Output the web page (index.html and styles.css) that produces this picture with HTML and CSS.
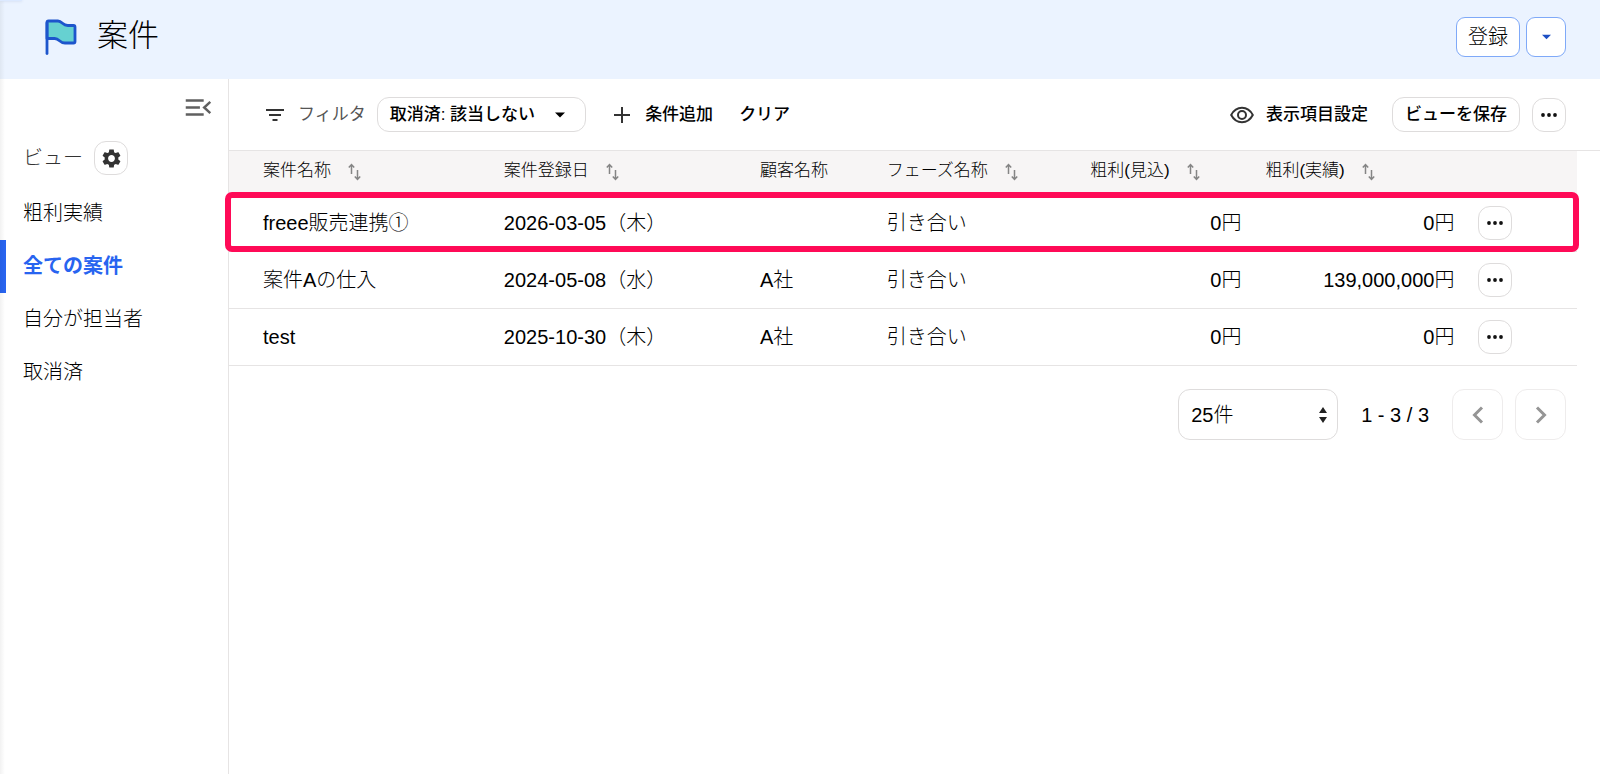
FILE: index.html
```html
<!DOCTYPE html>
<html lang="ja">
<head>
<meta charset="utf-8">
<title>案件</title>
<link rel="stylesheet" href="styles.css">
</head>
<body>
<svg class="defs" aria-hidden="true">
  <symbol id="sort" viewBox="0 0 14 18"><path d="M3.5 11V2M.8 4.5 3.5 1.5 6.200 4.500M9.500 7v9M6.800 13.500l2.700 3 2.700-3" fill="none" stroke="#858585" stroke-width="1.500"/></symbol>
  <symbol id="dots" viewBox="0 0 16 4"><circle cx="2" cy="2" r="1.900"/><circle cx="8" cy="2" r="1.900"/><circle cx="14" cy="2" r="1.900"/></symbol>
  <symbol id="caret" viewBox="0 0 10 6"><path d="M0 .5h10L5 5.500z"/></symbol>
</svg>
<div class="edge"></div>
<header class="header">
  <svg class="flag" viewBox="0 0 32 36" aria-hidden="true"><path d="M2 19.500V3.500Q2 2 3.500 2h9.500q2 0 4.500 2.300t5.500 2.200h5.500Q30 6.500 30 8v14.500Q30 24 28.500 24H20q-3 0-5.500-2.300T9.500 19.500z" fill="#66d1d1" stroke="#1d55cc" stroke-width="2.800" stroke-linejoin="round"/><path d="M2 4v30.500" fill="none" stroke="#1d55cc" stroke-width="2.800" stroke-linecap="round"/></svg>
  <h1 class="title">案件</h1>
  <div class="header-actions">
    <button class="btn primary">登録</button>
    <button class="btn primary split" aria-label="その他の登録"><svg class="caret" aria-hidden="true"><use href="#caret"/></svg></button>
  </div>
</header>
<div class="layout">
  <nav class="sidebar">
    <button class="collapse" aria-label="メニューを閉じる"><svg class="collapse-icon" viewBox="0 0 27 18" aria-hidden="true"><path d="M0 1.500h19M0 9h15M0 16.500h19M26 3l-6.500 6L26 15" fill="none" stroke="#606060" stroke-width="2.600"/></svg></button>
    <div class="view-head">
      <h2 class="view-title">ビュー</h2>
      <button class="btn icon-btn" aria-label="ビュー設定"><svg class="gear" viewBox="2 2 20 20" aria-hidden="true"><path d="M19.140 12.940c.040-.300.060-.610.060-.940 0-.320-.020-.640-.070-.940l2.030-1.580c.180-.140.230-.410.120-.610l-1.920-3.320c-.120-.220-.370-.290-.590-.220l-2.390.960c-.500-.380-1.030-.700-1.620-.940l-.360-2.540c-.040-.240-.240-.410-.480-.410h-3.840c-.240 0-.430.170-.470.410l-.360 2.540c-.590.240-1.130.570-1.620.940l-2.390-.960c-.220-.080-.470 0-.590.220L2.740 8.870c-.120.210-.080.470.120.610l2.030 1.580c-.050.300-.090.630-.090.940s.020.640.070.940l-2.030 1.580c-.180.140-.230.410-.120.610l1.920 3.320c.120.220.370.290.590.220l2.390-.960c.500.380 1.030.700 1.620.940l.360 2.540c.050.240.240.410.480.410h3.840c.240 0 .440-.170.470-.410l.360-2.540c.590-.240 1.130-.560 1.620-.940l2.390.960c.220.080.470 0 .590-.220l1.920-3.320c.120-.220.070-.470-.120-.610zM12 15.600c-1.980 0-3.600-1.620-3.600-3.600s1.620-3.600 3.600-3.600 3.600 1.620 3.600 3.600-1.620 3.600-3.600 3.600z"/></svg></button>
    </div>
    <ul class="views">
      <li><a class="view" href="#">粗利実績</a></li>
      <li><a class="view active" href="#" aria-current="page">全ての案件</a></li>
      <li><a class="view" href="#">自分が担当者</a></li>
      <li><a class="view" href="#">取消済</a></li>
    </ul>
  </nav>
  <main class="main">
    <div class="toolbar">
      <svg class="filter-icon" viewBox="0 0 18 12" aria-hidden="true"><path d="M0 1h18M3 6h12M6.500 11h5" fill="none" stroke="#333" stroke-width="2"/></svg>
      <span class="filter-label">フィルタ</span>
      <button class="btn chip">取消済: 該当しない<svg class="caret" aria-hidden="true"><use href="#caret"/></svg></button>
      <button class="link add"><svg class="plus" viewBox="0 0 16 16" aria-hidden="true"><path d="M8 0v16M0 8h16" stroke="#333" stroke-width="2"/></svg>条件追加</button>
      <button class="link">クリア</button>
      <div class="tools">
        <button class="link columns"><svg class="eye" viewBox="0 0 24 18" aria-hidden="true"><path d="M1.200 9Q5 1.800 12 1.800T22.800 9Q19 16.200 12 16.200T1.200 9z" fill="none" stroke="#333" stroke-width="2"/><circle cx="12" cy="9" r="4" fill="none" stroke="#333" stroke-width="2"/></svg>表示項目設定</button>
        <button class="btn save">ビューを保存</button>
        <button class="btn icon-btn" aria-label="その他"><svg class="dots" aria-hidden="true"><use href="#dots"/></svg></button>
      </div>
    </div>
    <div class="content">
      <table class="table">
        <thead>
          <tr>
            <th class="c-name">案件名称<svg class="sort" aria-hidden="true"><use href="#sort"/></svg></th>
            <th class="c-date">案件登録日<svg class="sort" aria-hidden="true"><use href="#sort"/></svg></th>
            <th class="c-client">顧客名称</th>
            <th class="c-phase">フェーズ名称<svg class="sort" aria-hidden="true"><use href="#sort"/></svg></th>
            <th class="c-plan">粗利(見込)<svg class="sort" aria-hidden="true"><use href="#sort"/></svg></th>
            <th class="c-actual">粗利(実績)<svg class="sort" aria-hidden="true"><use href="#sort"/></svg></th>
            <th></th>
          </tr>
        </thead>
        <tbody>
          <tr class="marked"><td>freee販売連携①</td><td>2026-03-05（木）</td><td></td><td>引き合い</td><td class="num">0円</td><td class="num">0円</td><td><button class="btn icon-btn" aria-label="操作"><svg class="dots" aria-hidden="true"><use href="#dots"/></svg></button></td></tr>
          <tr><td>案件Aの仕入</td><td>2024-05-08（水）</td><td>A社</td><td>引き合い</td><td class="num">0円</td><td class="num">139,000,000円</td><td><button class="btn icon-btn" aria-label="操作"><svg class="dots" aria-hidden="true"><use href="#dots"/></svg></button></td></tr>
          <tr><td>test</td><td>2025-10-30（木）</td><td>A社</td><td>引き合い</td><td class="num">0円</td><td class="num">0円</td><td><button class="btn icon-btn" aria-label="操作"><svg class="dots" aria-hidden="true"><use href="#dots"/></svg></button></td></tr>
        </tbody>
      </table>
      <div class="pager">
        <div class="size">
          <select class="size-select" aria-label="表示件数"><option>25件</option></select>
          <svg class="size-arrows" viewBox="0 0 8 18" aria-hidden="true"><path d="M0 7 4 1l4 6zM0 11h8l-4 6z" fill="#222"/></svg>
        </div>
        <span class="range">1 - 3 / 3</span>
        <div class="pages">
          <button class="btn page" disabled aria-label="前へ"><svg class="chevron" viewBox="0 0 12 18" aria-hidden="true"><path d="M10 1.500 2.500 9l7.500 7.500"/></svg></button>
          <button class="btn page" disabled aria-label="次へ"><svg class="chevron" viewBox="0 0 12 18" aria-hidden="true"><path d="M2 1.500 9.500 9 2 16.500"/></svg></button>
        </div>
      </div>
    </div>
  </main>
</div>
</body>
</html>
```
FILE: styles.css
```css
* { box-sizing: border-box; }

body {
  margin: 0;
  min-height: 100vh;
  display: flex;
  flex-direction: column;
  background: #fff;
  color: #000;
  font: 300 20px/30px "Liberation Sans", "Noto Sans CJK JP", sans-serif;
}

button, select { font: inherit; color: inherit; }
svg { display: block; flex: none; }
.defs { position: absolute; width: 0; height: 0; }

.edge {
  position: absolute;
  top: 0;
  bottom: 0;
  left: 0;
  width: 5px;
  background: linear-gradient(90deg, rgba(0, 0, 0, 0.05), transparent);
}

.edge::before {
  content: "";
  position: absolute;
  width: 22px;
  height: 1px;
  background: #dce9ff;
  box-shadow: 0 0 3px #b5c4dc;
}

.header {
  height: 79px;
  padding: 0 34px 6px 45px;
  display: flex;
  align-items: center;
  background: #ebf3ff;
}

.flag { width: 32px; height: 36px; }

.title {
  margin: 0 0 0 20px;
  padding-bottom: 2px;
  font-size: 31px;
  font-weight: 300;
  line-height: 40px;
}

.header-actions { display: flex; gap: 6px; margin-left: auto; }

.btn {
  display: flex;
  align-items: center;
  justify-content: center;
  padding: 0;
  border: 1px solid #dedcdc;
  border-radius: 12px;
  background: #fff;
}

.primary {
  height: 40px;
  padding: 0 11px;
  border-color: #7fa9f8;
  border-radius: 9px;
}

.split { width: 40px; fill: #1d4fc4; }
.caret { width: 10px; height: 6px; }
.split .caret { width: 9px; }

.layout { flex: 1; display: flex; }

.sidebar {
  width: 229px;
  flex: none;
  padding-top: 20px;
  border-right: 1px solid #e6e4e4;
}

.collapse {
  display: block;
  margin: 0 16px 25px auto;
  padding: 0;
  border: 0;
  background: none;
}

.collapse-icon { width: 27px; height: 17px; }

.view-head {
  display: flex;
  align-items: center;
  gap: 11px;
  padding-left: 23px;
}

.view-title {
  margin: 0;
  color: #333;
  font-size: 20px;
  font-weight: 300;
}

.icon-btn { width: 34px; height: 34px; fill: #111; }
.gear { width: 19px; height: 19px; fill: #333; }
.dots { width: 16px; height: 4px; }

.views { margin: 12px 0 0; padding: 0; list-style: none; }

.view {
  display: block;
  padding-left: 23px;
  color: inherit;
  line-height: 53px;
  text-decoration: none;
}

.active {
  padding-left: 17px;
  border-left: 6px solid #2864f0;
  color: #2864f0;
  font-weight: 700;
}

.main { flex: 1; min-width: 0; }

.toolbar {
  height: 72px;
  padding: 0 34px 0 37px;
  display: flex;
  align-items: center;
  border-bottom: 1px solid #e6e4e4;
  font-size: 17px;
}

.filter-icon { width: 18px; height: 12px; margin-right: 14px; }
.filter-label { color: #555; font-weight: 400; }

.chip {
  height: 35px;
  gap: 20px;
  margin: 0 28px 0 11px;
  padding: 0 20px 0 12px;
  font-weight: 500;
}

.link {
  display: flex;
  align-items: center;
  padding: 0;
  border: 0;
  background: none;
  font-weight: 500;
}

.add { gap: 15px; margin-right: 26px; }
.plus { width: 16px; height: 16px; }
.tools { display: flex; align-items: center; gap: 12px; margin-left: auto; }
.columns { gap: 12px; margin-right: 12px; }
.eye { width: 24px; height: 18px; }
.save { height: 35px; padding: 0 12px; font-weight: 500; }

.content { padding-right: 23px; }

.table {
  width: 100%;
  table-layout: fixed;
  border-collapse: separate;
  border-spacing: 0;
}

th, td { padding: 0 12px; text-align: left; white-space: nowrap; }
th:first-child, td:first-child { padding-left: 34px; }

th {
  height: 44px;
  padding-bottom: 4px;
  background: #f7f5f5;
  font-size: 17px;
  font-weight: 300;
}

td { height: 57px; border-bottom: 1px solid #e6e4e4; }
.num { text-align: right; }
.c-name { width: 19.5%; }
.c-date { width: 19%; }
.c-client { width: 9.4%; }
.c-phase { width: 15.1%; }
.c-plan { width: 13%; }
.c-actual { width: 15.8%; }

.sort {
  display: inline-block;
  width: 14px;
  height: 18px;
  margin-left: 17px;
  vertical-align: middle;
}

.marked { position: relative; }

.marked td:last-child::after {
  content: "";
  position: absolute;
  inset: -3px -2px 0 -4px;
  border: 6px solid #ff0a57;
  border-radius: 7px;
  pointer-events: none;
}

.pager {
  display: flex;
  align-items: center;
  justify-content: flex-end;
  gap: 23px;
  padding: 23px 11px 0 0;
}

.size { position: relative; width: 160px; }

.size-select {
  display: block;
  width: 100%;
  height: 51px;
  padding: 0 12px;
  appearance: none;
  border: 1px solid #dedcdc;
  border-radius: 12px;
  background: #fff;
  font-weight: 300;
}

.size-arrows {
  position: absolute;
  top: 17px;
  right: 11px;
  width: 8px;
  height: 18px;
  pointer-events: none;
}

.pages { display: flex; gap: 12px; }
.page { width: 51px; height: 51px; border-color: #eeecec; }
.chevron { width: 12px; height: 18px; fill: none; stroke: #959595; stroke-width: 3px; }
```
